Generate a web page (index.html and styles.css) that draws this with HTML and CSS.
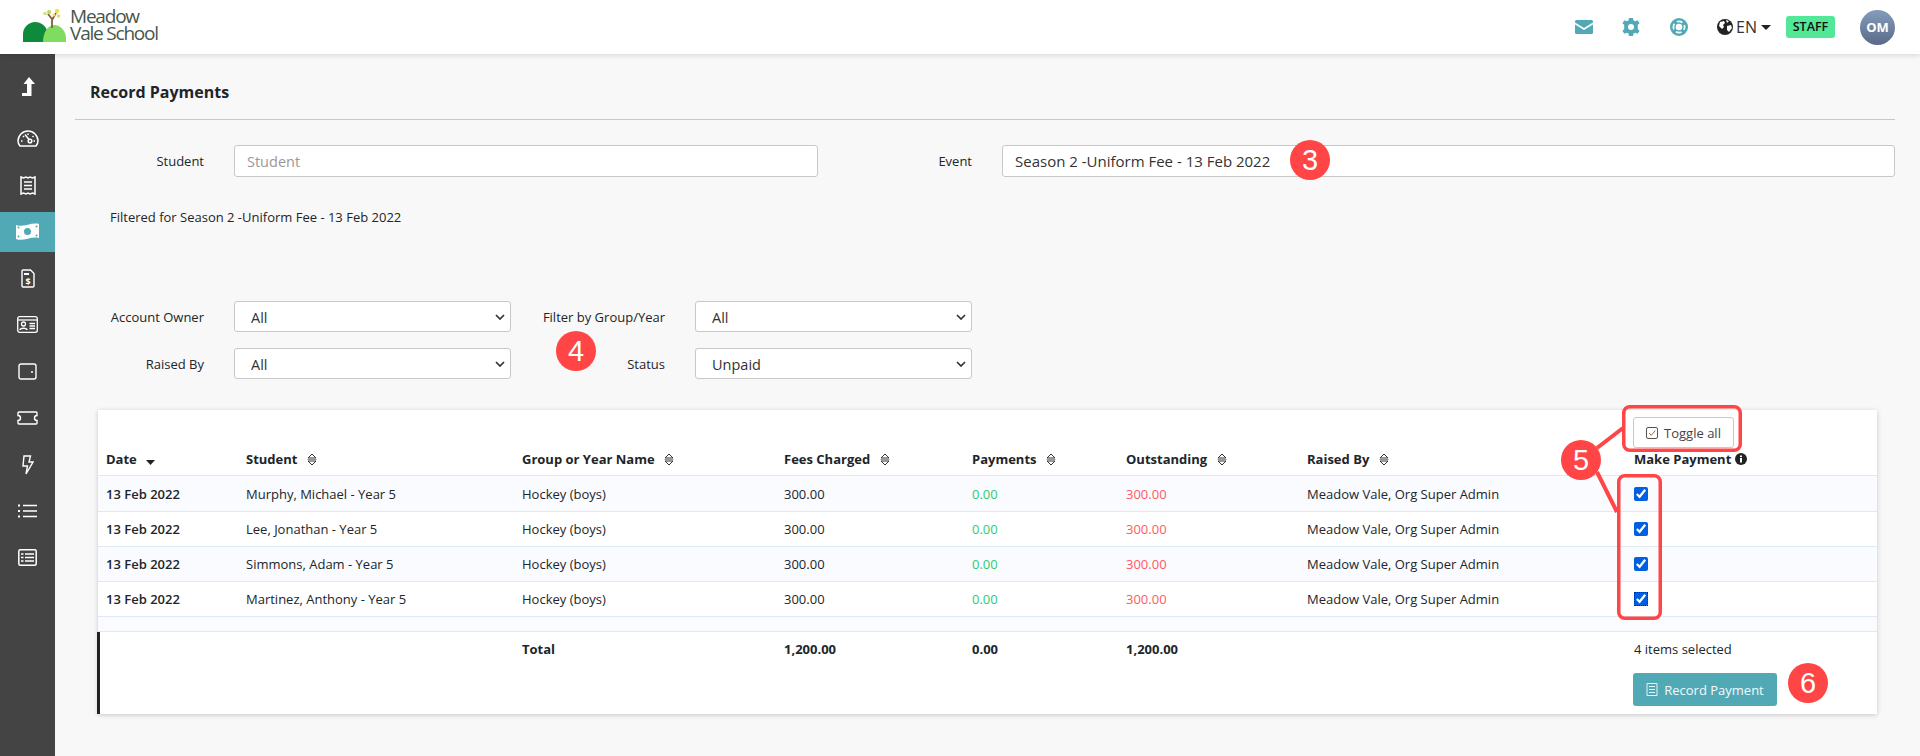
FILE: index.html
```html
<html>
<head>
    <title>Record Payments</title>
    <link rel="stylesheet" href="styles.css">
</head>
<body>
<header class="topbar">
    <div class="logo">
        <svg class="logo-mark" width="46" height="34" viewBox="0 0 46 34">
            <path d="M1 34 V26 C1 19 7 14 13 14 C19 14 25 18 26 26 V34 Z" fill="#0d8a3a"/>
            <path d="M21 34 C21 24 26 17 32.500 17 C39 17 44 24 44 30 V34 Z" fill="#7fdc5e"/>
            <path d="M30 20 L30 11 L26 6 M30 12 L34 5" stroke="#8a5a3a" stroke-width="1.800" fill="none"/>
            <circle cx="23" cy="5.500" r="1.800" fill="#d8e070"/>
            <circle cx="27" cy="4" r="2" fill="#b8d860"/>
            <circle cx="32" cy="7" r="1.500" fill="#e8e060"/>
            <circle cx="35" cy="3" r="2.200" fill="#f0e050"/>
            <circle cx="36.500" cy="8" r="1.800" fill="#d8e070"/>
        </svg>
        <div class="logo-text">Meadow<br>Vale School</div>
    </div>
    <div class="top-actions">
        <svg class="top-icon icon-mail" width="18" height="14" viewBox="0 0 18 14"><path d="M1.500 0 H16.500 A1.500 1.500 0 0 1 18 1.500 V2.500 L9 8 L0 2.500 V1.500 A1.500 1.500 0 0 1 1.500 0 Z M0 4.500 L9 10 L18 4.500 V12.500 A1.500 1.500 0 0 1 16.500 14 H1.500 A1.500 1.500 0 0 1 0 12.500 Z" fill="#51a9b6"/></svg>
        <svg class="top-icon" width="18" height="18" viewBox="0 0 18 18"><path fill-rule="evenodd" d="M7 0 H11 L11.500 2.400 L13.400 3.300 L15.600 2.200 L17.600 5.200 L15.800 6.800 V11.200 L17.600 12.800 L15.600 15.800 L13.400 14.700 L11.500 15.600 L11 18 H7 L6.500 15.600 L4.600 14.700 L2.400 15.800 L.4 12.800 L2.200 11.200 V6.800 L.4 5.200 L2.400 2.200 L4.600 3.300 L6.500 2.400 Z M9 6 A3 3 0 1 0 9 12 A3 3 0 1 0 9 6 Z" fill="#51a9b6"/></svg>
        <svg class="top-icon" width="18" height="18" viewBox="0 0 18 18"><circle cx="9" cy="9" r="9" fill="#51a9b6"/><circle cx="9" cy="9" r="3.300" fill="#fff"/><circle cx="9" cy="9" r="5.600" fill="none" stroke="#fff" stroke-width="1.700" stroke-dasharray="5.800 3" stroke-dashoffset="2.900"/></svg>
        <div class="lang">
            <svg class="globe" width="16" height="16" viewBox="0 0 16 16"><circle cx="8" cy="8" r="8" fill="#222"/><path d="M3 3 L7 2 L8 4 L6 6 L7 8 L5 10 L2 7 Z M10 7 L14 6 L15 9 L12 13 L10 11 Z M9 1 L12 2 L10 4 Z" fill="#fff"/></svg>
            <span>EN</span>
            <span class="caret"></span>
        </div>
        <span class="staff-badge">STAFF</span>
        <span class="avatar">OM</span>
    </div>
</header>

<div class="layout">
    <nav class="sidebar">
        <a class="nav-item nav-first"><svg width="14" height="20" viewBox="0 0 14 20"><path d="M8 0 L14 7 H10.500 V19 H1 V16 H6 V7 H2.500 Z" fill="#fff"/></svg></a>
        <a class="nav-item"><svg width="22" height="17" viewBox="0 0 22 17" fill="none" stroke="#fff" stroke-width="1.500"><path d="M3 16 H19 C20.500 14 21 12.500 21 11 A10 10 0 0 0 1 11 C1 12.500 1.500 14 3 16 Z"/><circle cx="13" cy="11" r="1.800"/><path d="M12 9.500 L8 4.500 M4 11 H5.500 M6 6 L7 7 M11 3.500 V5 M16.500 6 L15.500 7 M18 11 H16.500"/></svg></a>
        <a class="nav-item"><svg width="16" height="19" viewBox="0 0 16 19" fill="none" stroke="#fff" stroke-width="1.500"><path d="M1 1 L3.500 2 L6 1 L8 2 L10 1 L12.500 2 L15 1 V18 L12.500 17 L10 18 L8 17 L6 18 L3.500 17 L1 18 Z"/><path d="M4 6 H12 M4 9.500 H12 M4 13 H12" stroke-width="1.600"/></svg></a>
        <a class="nav-item nav-active"><svg width="23" height="17" viewBox="0 0 23 17"><path fill-rule="evenodd" d="M0 2 C7 5 15 -1 23 1 V15 C15 13 7 19 0 16 Z M11.500 5 A3.500 3.500 0 1 0 11.500 12 A3.500 3.500 0 1 0 11.500 5 Z" fill="#fff"/><circle cx="2.500" cy="4.500" r="1" fill="#51a9b6"/><circle cx="20.500" cy="3.500" r="1" fill="#51a9b6"/><circle cx="2.500" cy="13.500" r="1" fill="#51a9b6"/><circle cx="20.500" cy="12.500" r="1" fill="#51a9b6"/></svg></a>
        <a class="nav-item"><svg width="14" height="19" viewBox="0 0 14 19" fill="none" stroke="#fff" stroke-width="1.400"><path d="M2 1 H9.500 L13 4.500 V17 A1 1 0 0 1 12 18 H2 A1 1 0 0 1 1 17 V2 A1 1 0 0 1 2 1 Z"/><path d="M3 5 H8" stroke-width="2"/><text x="7" y="15.500" class="nav-dollar">$</text></svg></a>
        <a class="nav-item"><svg width="21" height="17" viewBox="0 0 21 17" fill="none" stroke="#fff" stroke-width="1.300"><rect x=".7" y=".7" width="19.600" height="15.600" rx="2"/><path d="M1 4 H20"/><circle cx="6.500" cy="8" r="2"/><path d="M3 14 C3 11.500 10 11.500 10 14 M12.500 7.500 H18 M12.500 10 H18 M12.500 12.500 H18" stroke-width="1.500"/></svg></a>
        <a class="nav-item"><svg width="19" height="17" viewBox="0 0 19 17" fill="none" stroke="#fff" stroke-width="1.400"><path d="M3 1 H16 A2 2 0 0 1 18 3 V14 A2 2 0 0 1 16 16 H3 A2 2 0 0 1 1 14 V3 A2 2 0 0 1 3 1 Z"/><circle cx="14" cy="9" r="1" fill="#fff" stroke="none"/></svg></a>
        <a class="nav-item"><svg width="21" height="14" viewBox="0 0 21 14" fill="none" stroke="#fff" stroke-width="1.400"><path d="M2 1 H19 A1 1 0 0 1 20 2 V4.500 A2.500 2.500 0 0 0 20 9.500 V12 A1 1 0 0 1 19 13 H2 A1 1 0 0 1 1 12 V9.500 A2.500 2.500 0 0 0 1 4.500 V2 A1 1 0 0 1 2 1 Z"/></svg></a>
        <a class="nav-item"><svg width="12" height="20" viewBox="0 0 12 20" fill="none" stroke="#fff" stroke-width="1.400"><path d="M2 1 H8.500 L7 7 H11 L4 19 L5.500 11 H1 Z"/></svg></a>
        <a class="nav-item"><svg width="19" height="14" viewBox="0 0 19 14" fill="none" stroke="#fff" stroke-width="1.600"><path d="M5 1.500 H19 M5 7 H19 M5 12.500 H19"/><path d="M0 1.500 H2 M0 7 H2 M0 12.500 H2" stroke-width="2.200"/></svg></a>
        <a class="nav-item"><svg width="19" height="17" viewBox="0 0 19 17" fill="none" stroke="#fff" stroke-width="1.500"><rect x=".8" y=".8" width="17.400" height="15.400" rx="1.500"/><path d="M3 5 H5.500 M3 8.500 H5.500 M3 12 H5.500 M7 5 H16 M7 8.500 H16 M7 12 H16" stroke-width="1.700"/></svg></a>
    </nav>

    <main class="content">
        <h1 class="page-title">Record Payments</h1>

        <div class="form-row top-row">
            <label class="form-label">Student</label>
            <input class="form-input student-input" type="text" placeholder="Student">
            <label class="form-label label-second">Event</label>
            <input class="form-input event-input" type="text" value="Season 2 -Uniform Fee - 13 Feb 2022">
        </div>

        <p class="filter-note">Filtered for Season 2 -Uniform Fee - 13 Feb 2022</p>

        <div class="form-row filter-row">
            <label class="form-label">Account Owner</label>
            <select class="form-select"><option>All</option></select>
            <label class="form-label label-second">Filter by Group/Year</label>
            <select class="form-select"><option>All</option></select>
        </div>
        <div class="form-row filter-row">
            <label class="form-label">Raised By</label>
            <select class="form-select"><option>All</option></select>
            <label class="form-label label-second">Status</label>
            <select class="form-select"><option>Unpaid</option></select>
        </div>

        <div class="table-card">
            <table class="payments">
                <colgroup>
                    <col class="col-date"><col class="col-student"><col class="col-group"><col class="col-fees">
                    <col class="col-payments"><col class="col-outstanding"><col class="col-raised"><col class="col-make">
                </colgroup>
                <thead>
                    <tr>
                        <th>Date <svg class="sort-down" width="9" height="5" viewBox="0 0 9 5"><path d="M0 0 H9 L4.500 5 Z" fill="#222"/></svg></th>
                        <th>Student <svg class="sort" width="10" height="13" viewBox="0 0 10 13" fill="none" stroke="#333"><path d="M1 5 L5 1 L9 5 Z M1 8 L5 12 L9 8 Z"/><path d="M.5 6.500 H9.500" stroke-width=".5"/></svg></th>
                        <th>Group or Year Name <svg class="sort" width="10" height="13" viewBox="0 0 10 13" fill="none" stroke="#333"><path d="M1 5 L5 1 L9 5 Z M1 8 L5 12 L9 8 Z"/><path d="M.5 6.500 H9.500" stroke-width=".5"/></svg></th>
                        <th>Fees Charged <svg class="sort" width="10" height="13" viewBox="0 0 10 13" fill="none" stroke="#333"><path d="M1 5 L5 1 L9 5 Z M1 8 L5 12 L9 8 Z"/><path d="M.5 6.500 H9.500" stroke-width=".5"/></svg></th>
                        <th>Payments <svg class="sort" width="10" height="13" viewBox="0 0 10 13" fill="none" stroke="#333"><path d="M1 5 L5 1 L9 5 Z M1 8 L5 12 L9 8 Z"/><path d="M.5 6.500 H9.500" stroke-width=".5"/></svg></th>
                        <th>Outstanding <svg class="sort" width="10" height="13" viewBox="0 0 10 13" fill="none" stroke="#333"><path d="M1 5 L5 1 L9 5 Z M1 8 L5 12 L9 8 Z"/><path d="M.5 6.500 H9.500" stroke-width=".5"/></svg></th>
                        <th>Raised By <svg class="sort" width="10" height="13" viewBox="0 0 10 13" fill="none" stroke="#333"><path d="M1 5 L5 1 L9 5 Z M1 8 L5 12 L9 8 Z"/><path d="M.5 6.500 H9.500" stroke-width=".5"/></svg></th>
                        <th>
                            <button class="btn-toggle">
                                <svg width="12" height="12" viewBox="0 0 12 12" fill="none" stroke="#555"><rect x=".5" y=".5" width="11" height="11" rx="1.500"/><path d="M3 6 L5.300 8.300 L9.300 3.500" stroke="#a06a30"/></svg>
                                Toggle all
                            </button>
                            <div class="make-title">Make Payment <svg width="12" height="12" viewBox="0 0 12 12"><circle cx="6" cy="6" r="6" fill="#222"/><rect x="5" y="5" width="2" height="4.500" fill="#fff"/><rect x="5" y="2.500" width="2" height="1.600" fill="#fff"/></svg></div>
                        </th>
                    </tr>
                </thead>
                <tbody>
                    <tr class="striped first-row">
                        <td class="date-cell">13 Feb 2022</td><td>Murphy, Michael - Year 5</td><td>Hockey (boys)</td><td>300.00</td>
                        <td class="paid">0.00</td><td class="owing">300.00</td><td>Meadow Vale, Org Super Admin</td>
                        <td><input class="pay-check" type="checkbox" checked></td>
                    </tr>
                    <tr>
                        <td class="date-cell">13 Feb 2022</td><td>Lee, Jonathan - Year 5</td><td>Hockey (boys)</td><td>300.00</td>
                        <td class="paid">0.00</td><td class="owing">300.00</td><td>Meadow Vale, Org Super Admin</td>
                        <td><input class="pay-check" type="checkbox" checked></td>
                    </tr>
                    <tr class="striped">
                        <td class="date-cell">13 Feb 2022</td><td>Simmons, Adam - Year 5</td><td>Hockey (boys)</td><td>300.00</td>
                        <td class="paid">0.00</td><td class="owing">300.00</td><td>Meadow Vale, Org Super Admin</td>
                        <td><input class="pay-check" type="checkbox" checked></td>
                    </tr>
                    <tr>
                        <td class="date-cell">13 Feb 2022</td><td>Martinez, Anthony - Year 5</td><td>Hockey (boys)</td><td>300.00</td>
                        <td class="paid">0.00</td><td class="owing">300.00</td><td>Meadow Vale, Org Super Admin</td>
                        <td><input class="pay-check check-focus" type="checkbox" checked></td>
                    </tr>
                    <tr class="striped spacer-row"><td colspan="8"></td></tr>
                </tbody>
                <tfoot>
                    <tr>
                        <td class="foot-first"></td><td></td><td>Total</td><td>1,200.00</td><td>0.00</td><td>1,200.00</td><td></td>
                        <td class="foot-make">
                            <div class="selected-count">4 items selected</div>
                            <button class="btn-record">
                                <svg width="12" height="13" viewBox="0 0 12 13" fill="none" stroke="#e6f4f6"><path d="M1 .5 H11 V12.500 H1 Z"/><path d="M3 3.500 H9 M3 6.500 H9 M3 9.500 H9"/></svg>
                                Record Payment
                            </button>
                        </td>
                    </tr>
                </tfoot>
            </table>
        </div>
    </main>
</div>

<!-- callouts drawn over the page -->
<svg class="callout-lines" width="1920" height="756" viewBox="0 0 1920 756" fill="none" stroke="#ff4545" stroke-width="3.500">
    <rect x="1623.750" y="406.750" width="116.500" height="43.500" rx="6"/>
    <rect x="1618.750" y="475.750" width="41.500" height="142.500" rx="6"/>
    <path d="M1597 448 L1623 428 M1597 472 L1617 512" stroke-width="4"/>
</svg>
<span class="callout callout-3">3</span>
<span class="callout callout-4">4</span>
<span class="callout callout-5">5</span>
<span class="callout callout-6">6</span>
</body>
</html>
```

FILE: styles.css
```css
* {
    box-sizing: border-box;
}

body {
    margin: 0;
    height: 756px;
    overflow: hidden;
    position: relative;
    background: #f8f8f8;
    color: #212529;
    font-family: "Open Sans", "Noto Sans", sans-serif;
    font-size: 13px;
}

.topbar {
    height: 54px;
    background: #fff;
    box-shadow: 0 1px 6px rgba(0, 0, 0, 0.15);
    display: flex;
    align-items: center;
    justify-content: space-between;
    padding: 0 25px 0 22px;
    position: relative;
}

.logo {
    display: flex;
    align-items: center;
    gap: 2px;
    margin-bottom: 4px;
}

.logo-text {
    font-size: 19px;
    line-height: 17px;
    letter-spacing: -1.2px;
    color: #46564a;
}

.top-actions {
    display: flex;
    align-items: center;
}

.top-icon {
    margin-right: 30px;
}

.icon-mail {
    margin-right: 29px;
}

.lang {
    display: flex;
    align-items: center;
    gap: 4px;
    font-size: 16px;
    color: #333;
    margin-left: -1px;
}

.globe {
    margin-right: -1px;
}

.caret {
    width: 0;
    height: 0;
    border-left: 5px solid transparent;
    border-right: 5px solid transparent;
    border-top: 5px solid #222;
}

.staff-badge {
    margin-left: 15px;
    width: 49px;
    height: 22px;
    line-height: 22px;
    text-align: center;
    background: #52e898;
    border-radius: 3px;
    font-size: 12.5px;
    font-weight: 600;
    color: #111;
}

.avatar {
    margin-left: 25px;
    width: 35px;
    height: 35px;
    line-height: 35px;
    text-align: center;
    border-radius: 50%;
    background: linear-gradient(180deg, #849cbc, #5a6a88);
    color: #fff;
    font-size: 13px;
    font-weight: 700;
}

.layout {
    display: flex;
    height: 702px;
}

.sidebar {
    width: 55px;
    flex-shrink: 0;
    background: #444;
    padding-top: 13px;
    display: flex;
    flex-direction: column;
    gap: 6.6px;
}

.nav-item {
    height: 40px;
    display: flex;
    align-items: center;
    justify-content: center;
}

.nav-first {
    margin-bottom: 5px;
}

.nav-active {
    background: #51a9b6;
}

.nav-dollar {
    font-size: 9px;
    font-weight: 700;
    fill: #fff;
    stroke: none;
    text-anchor: middle;
}

.content {
    flex: 1;
    padding: 0 25px 0 20px;
}

.page-title {
    margin: 0;
    padding: 0 0 16px 15px;
    height: 66px;
    display: flex;
    align-items: flex-end;
    font-size: 16px;
    font-weight: 700;
    line-height: 22px;
    border-bottom: 1px solid #c8c8c8;
}

.form-row {
    display: flex;
    align-items: center;
}

.top-row {
    margin-top: 25px;
}

.form-label {
    width: 129px;
    margin-right: 30px;
    text-align: right;
    flex-shrink: 0;
    font-size: 13px;
}

.label-second {
    width: 154px;
    margin-right: 30px;
}

.form-input,
.form-select {
    border: 1px solid #c8c8c8;
    border-radius: 3px;
    background-color: #fff;
    color: #333;
    font-family: inherit;
    font-size: 14.5px;
}

.form-input {
    height: 32px;
    padding: 0 12px;
}

.form-input::placeholder {
    color: #999;
}

.student-input {
    width: 584px;
}

.event-input {
    flex: 1;
    font-size: 15px;
}

.form-select {
    appearance: none;
    width: 277px;
    height: 31px;
    padding: 2px 16px 0;
    background-image: url("data:image/svg+xml,%3Csvg xmlns='http://www.w3.org/2000/svg' width='10' height='6'%3E%3Cpath d='M1 1 L5 5 L9 1' fill='none' stroke='%23333' stroke-width='1.700'/%3E%3C/svg%3E");
    background-repeat: no-repeat;
    background-position: right 5px center;
}

.filter-note {
    margin: 31px 0 0 35px;
    height: 18px;
    line-height: 18px;
    font-size: 13px;
}

.filter-row {
    margin-top: 16px;
}

.filter-note + .filter-row {
    margin-top: 75px;
}

.table-card {
    margin: 31px 18px 0 23px;
    background: #fff;
    box-shadow: 0 1px 5px rgba(0, 0, 0, 0.2);
}

.payments {
    width: 100%;
    table-layout: fixed;
    border-collapse: separate;
    border-spacing: 0;
}

.col-date { width: 140px; }
.col-student { width: 276px; }
.col-group { width: 262px; }
.col-fees { width: 188px; }
.col-payments { width: 154px; }
.col-outstanding { width: 181px; }
.col-raised { width: 327px; }

.payments th {
    height: 66px;
    padding: 0 8px 7px;
    text-align: left;
    vertical-align: bottom;
    font-size: 13px;
    font-weight: 700;
    line-height: 18px;
    border-bottom: 1px solid #dfe8f5;
}

.sort,
.sort-down {
    margin-left: 6px;
    vertical-align: -1px;
}

.sort {
    vertical-align: -2px;
}

.btn-toggle {
    display: flex;
    align-items: center;
    gap: 6px;
    width: 101px;
    height: 31px;
    justify-content: center;
    margin: 0 0 2px -1px;
    background: #fff;
    border: 1px solid #c8c8c8;
    border-radius: 3px;
    color: #444;
    font-family: inherit;
    font-size: 13px;
}

.make-title {
    white-space: nowrap;
}

.make-title svg {
    vertical-align: -1px;
}

.payments tbody td {
    height: 35px;
    padding: 0 8px;
    font-size: 13px;
    border-bottom: 1px solid #dfe8f5;
}

.payments .first-row td {
    height: 36px;
}

.striped td {
    background: #f9fbff;
}

.date-cell {
    font-weight: 600;
}

.paid {
    color: #2ecc71;
}

.owing {
    color: #ff5a5f;
}

.pay-check {
    display: block;
    margin: 0;
    width: 14px;
    height: 14px;
    accent-color: #0060df;
}

.check-focus {
    outline: 1px dotted #002a80;
    outline-offset: -1px;
}

.payments .spacer-row td {
    height: 15px;
    padding: 0;
}

.payments tfoot td {
    padding: 7px 8px 8px;
    vertical-align: top;
    font-size: 13px;
    font-weight: 700;
    line-height: 20px;
}

.payments .foot-first {
    border-left: 2px solid #222;
    box-shadow: -1px 0 0 #222;
}

.payments .foot-make {
    font-weight: 400;
}

.selected-count {
    margin-bottom: 14px;
}

.btn-record {
    display: flex;
    align-items: center;
    justify-content: center;
    gap: 6px;
    width: 144px;
    height: 33px;
    margin-left: -1px;
    background: #51a9b6;
    border: none;
    border-radius: 3px;
    color: #f2fafb;
    font-family: inherit;
    font-size: 13px;
}

.callout-lines {
    position: absolute;
    left: 0;
    top: 0;
}

.callout {
    position: absolute;
    width: 40px;
    height: 40px;
    line-height: 40px;
    border-radius: 50%;
    background: #ff4545;
    color: #fff;
    text-align: center;
    font-family: "Liberation Sans", sans-serif;
    font-size: 29px;
}

.callout-3 { left: 1290px; top: 140px; }
.callout-4 { left: 556px; top: 331px; }
.callout-5 { left: 1561px; top: 440px; }
.callout-6 { left: 1788px; top: 663px; }
```
